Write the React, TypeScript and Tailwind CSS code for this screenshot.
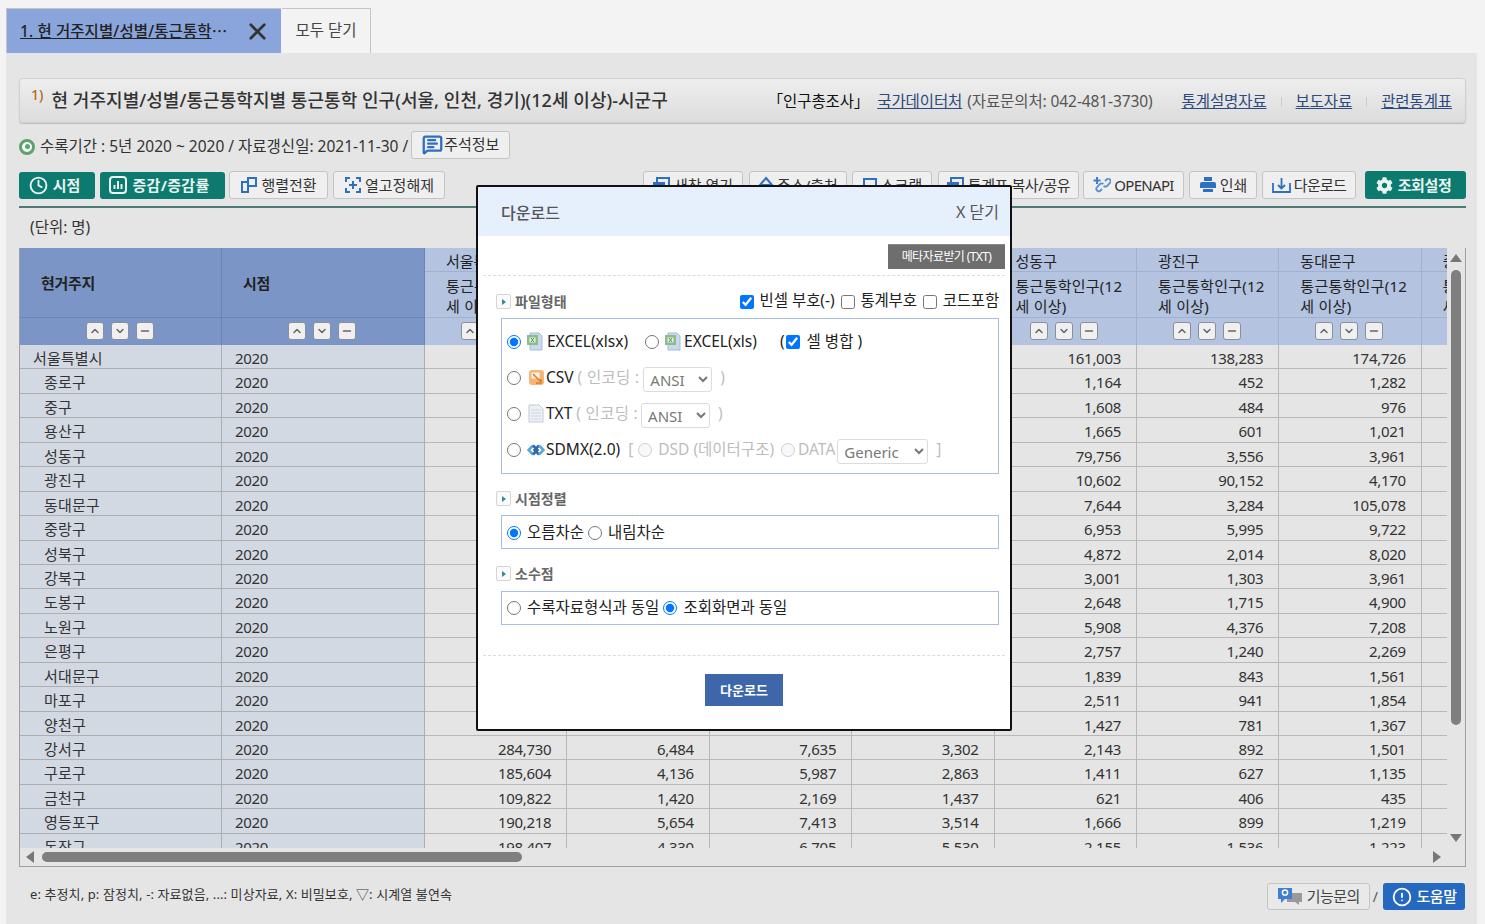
import { Clock, MessageSquareText, ChevronUp, ChevronDown, Minus, X, Info } from 'lucide-react';
import { FaCog } from 'react-icons/fa';

const font = { fontFamily: '"Noto Sans", "Noto Sans CJK KR", sans-serif' };

const names = ['서울특별시', '종로구', '중구', '용산구', '성동구', '광진구', '동대문구', '중랑구', '성북구', '강북구', '도봉구', '노원구', '은평구', '서대문구', '마포구', '양천구', '강서구', '구로구', '금천구', '영등포구', '동작구'];

// columns hidden behind the dialog are only filled in for the last rows
const blank = (tail: string[]) => [...Array(16).fill(''), ...tail];
const colA = blank(['284,730', '185,604', '109,822', '190,218', '198,407']);
const colB = blank(['6,484', '4,136', '1,420', '5,654', '4,330']);
const colC = blank(['7,635', '5,987', '2,169', '7,413', '6,705']);
const colD = blank(['3,302', '2,863', '1,437', '3,514', '5,530']);
const colE = ['161,003', '1,164', '1,608', '1,665', '79,756', '10,602', '7,644', '6,953', '4,872', '3,001', '2,648', '5,908', '2,757', '1,839', '2,511', '1,427', '2,143', '1,411', '621', '1,666', '2,155'];
const colF = ['138,283', '452', '484', '601', '3,556', '90,152', '3,284', '5,995', '2,014', '1,303', '1,715', '4,376', '1,240', '843', '941', '781', '892', '627', '406', '899', '1,536'];
const colG = ['174,726', '1,282', '976', '1,021', '3,961', '4,170', '105,078', '9,722', '8,020', '3,961', '4,900', '7,208', '2,269', '1,561', '1,854', '1,367', '1,501', '1,135', '435', '1,219', '1,223'];
const dataCols = [colA, colB, colC, colD, colE, colF, colG];

const heads = ['서울특별시', '종로구', '중구', '용산구', '성동구', '광진구', '동대문구', '중랑구'];

function SortButtons() {
  const cls = 'flex h-[18px] w-[18px] items-center justify-center rounded-[3px] border border-[#8a8f98] bg-[#f0f0f0] text-[#666]';
  return (
    <div className="mr-[2px] mb-[2px] flex gap-[7px]">
      <span className={cls}><ChevronUp size={12} strokeWidth={3} /></span>
      <span className={cls}><ChevronDown size={12} strokeWidth={3} /></span>
      <span className={cls}><Minus size={12} strokeWidth={3} /></span>
    </div>
  );
}

function TableHead() {
  return (
    <div className="grid h-[97px] w-[1545px] grid-cols-[202px_203px_repeat(8,142.4px)] grid-rows-[24px_45px_28px] text-[15px] text-[#222]">
      <div className="row-span-2 flex items-start border-r border-[#6a84b3] bg-[#7b96c6] pt-[24px] pl-[21px] font-bold tracking-[-0.3px]">현거주지</div>
      <div className="row-span-2 flex items-start border-r border-[#6a84b3] bg-[#7b96c6] pt-[24px] pl-[21px] font-bold tracking-[-0.3px]">시점</div>
      {heads.map((h) => (
        <div key={h} className="flex items-center border-r border-b border-[#9fb1d1] bg-[#b3c3e0] pt-[3px] pl-[21px]">{h}</div>
      ))}
      {heads.map((h) => (
        <div key={h} className="border-r border-[#9fb1d1] bg-[#b3c3e0] pt-[4px] pr-[8px] pl-[21px] leading-[20px] tracking-[0.25px]">통근통학인구(12세 이상)</div>
      ))}
      <div className="flex items-center justify-center border-t border-r border-[#6a84b3] bg-[#7b96c6]"><SortButtons /></div>
      <div className="flex items-center justify-center border-t border-r border-[#6a84b3] bg-[#7b96c6]"><SortButtons /></div>
      {heads.map((h) => (
        <div key={h} className="flex items-center justify-center border-t border-r border-[#9fb1d1] bg-[#b3c3e0]"><SortButtons /></div>
      ))}
    </div>
  );
}

function TableBody() {
  return (
    <div className="w-[1545px] text-[15px] text-[#333]">
      {names.map((name, i) => (
        <div key={name} className="grid grid-cols-[202px_203px_repeat(8,142.4px)] grid-rows-[24.45px] leading-[24px]">
          <div className={`border-r border-b border-[#aeaeae] bg-[#d3d9e2] pt-[1px] tracking-[0.15px] ${i === 0 ? 'pl-[13px]' : 'pl-[24px]'}`}>{name}</div>
          <div className="border-r border-b border-[#aeaeae] bg-[#d3d9e2] pt-[1px] pl-[13px] tracking-[-0.3px]">2020</div>
          {dataCols.map((col, c) => (
            <div key={c} className="border-r border-b border-[#b8b8b8] pt-[1px] pr-[15px] text-right tracking-[-0.3px]">{col[i]}</div>
          ))}
          <div className="border-b border-[#b8b8b8]" />
        </div>
      ))}
    </div>
  );
}

function ToolButton({ children, className = '' }: { children: React.ReactNode; className?: string }) {
  return (
    <span className={`flex h-[28px] items-center justify-center gap-[3px] rounded-[3px] border border-[#c4c4c4] bg-[#efefef] text-[15px] text-[#333] ${className}`}>
      {children}
    </span>
  );
}

function SectionTitle({ label }: { label: string }) {
  return (
    <div className="flex items-center gap-[4px] text-[14px] font-bold text-[#666]">
      <span className="flex h-[15px] w-[15px] items-center justify-center rounded-[2px] border border-[#d5d5d5] bg-[#fafafa]">
        <span className="h-0 w-0 border-y-[3px] border-l-[4px] border-y-transparent border-l-[#2f8f8f]" />
      </span>
      {label}
    </div>
  );
}

function ExcelIcon() {
  return (
    <svg width="17" height="19" viewBox="0 0 17 19">
      <path d="M4 1h9l3 3v14H4z" fill="#c9d9ee" stroke="#a5bcd8" />
      <rect x="1" y="3" width="11" height="10" fill="#8dbb8a" />
      <rect x="3.5" y="5.5" width="6" height="5" fill="#e7f2e4" />
      <path d="M5 6l3 4M8 6l-3 4" stroke="#4f8f4f" />
    </svg>
  );
}

function CsvIcon() {
  return (
    <svg width="17" height="17" viewBox="0 0 17 17">
      <rect x="1" y="1" width="15" height="15" rx="3" fill="#f6b677" />
      <rect x="3.5" y="3.5" width="8" height="6" fill="#fff3e2" />
      <path d="M5 5l7 7M13 10v4H8" stroke="#d97f2a" strokeWidth="1.6" fill="none" />
    </svg>
  );
}

function TxtIcon() {
  return (
    <svg width="16" height="19" viewBox="0 0 16 19">
      <path d="M1 1h10l4 4v13H1z" fill="#eef1f5" stroke="#c3c9d1" />
      <path d="M3 6h10M3 9h10M3 12h10M3 15h10" stroke="#cdd6e2" />
    </svg>
  );
}

function SdmxIcon() {
  return (
    <svg width="18" height="12" viewBox="0 0 18 12" fill="none" strokeWidth="2.6">
      <path d="M6 1.5L1.5 6 6 10.5" stroke="#5aa6dc" />
      <path d="M6 1.5L10.5 6 6 10.5" stroke="#2f6aa8" />
      <path d="M12 1.5L7.5 6 12 10.5" stroke="#2f6aa8" />
      <path d="M12 1.5L16.5 6 12 10.5" stroke="#5aa6dc" />
    </svg>
  );
}

function OpenApiIcon() {
  return (
    <svg width="18" height="18" viewBox="0 0 18 18" fill="none">
      <path d="M4 1v7M0.5 4.5h7" stroke="#3f7fd0" strokeWidth="2" />
      <path d="M12 5l1.5-1.5a2.4 2.4 0 0 1 3.4 3.4L14 10a2.4 2.4 0 0 1-3.4 0" stroke="#5d8ed0" strokeWidth="1.8" />
      <path d="M9 13l-1.5 1.5a2.4 2.4 0 0 1-3.4-3.4L7 8a2.4 2.4 0 0 1 3.4 0" stroke="#5d8ed0" strokeWidth="1.8" />
    </svg>
  );
}

function PrintIcon() {
  return (
    <svg width="18" height="18" viewBox="0 0 18 18">
      <rect x="5" y="1" width="8" height="4" fill="#2f6fc0" />
      <path d="M1 8a2 2 0 0 1 2-2h12a2 2 0 0 1 2 2v4H1z" fill="#2f6fc0" />
      <rect x="4" y="13" width="10" height="3" fill="#2f6fc0" />
    </svg>
  );
}

function TrayIcon() {
  return (
    <svg width="19" height="18" viewBox="0 0 19 18" fill="none" stroke="#2f6fc0" strokeWidth="1.8">
      <path d="M1 7v9h17V7" />
      <path d="M9.5 2v10M6 9l3.5 3.5L13 9" />
    </svg>
  );
}

function SwapIcon() {
  return (
    <svg width="18" height="18" viewBox="0 0 18 18" fill="none" stroke="#2f6fc0" strokeWidth="2">
      <rect x="8" y="2" width="8" height="8" />
      <path d="M8 6H2v10h6v-5" />
    </svg>
  );
}

function UnfreezeIcon() {
  return (
    <svg width="18" height="18" viewBox="0 0 18 18" fill="none" stroke="#2f6fc0" strokeWidth="2">
      <path d="M6 2H2v4M12 2h4v4M6 16H2v-4M12 16h4v-4M9 5v8M5 9h8" />
    </svg>
  );
}

function WindowIcon() {
  return (
    <svg width="18" height="18" viewBox="0 0 18 18" fill="none" stroke="#2f6fc0" strokeWidth="2">
      <rect x="4" y="2" width="12" height="10" />
      <rect x="1" y="7" width="10" height="9" fill="#2f6fc0" />
    </svg>
  );
}

function UpIcon() {
  return (
    <svg width="16" height="18" viewBox="0 0 16 18" fill="none" stroke="#2f6fc0" strokeWidth="2">
      <path d="M8 2l6 7H2z" />
      <rect x="4" y="9" width="8" height="7" />
    </svg>
  );
}

function ScrapIcon() {
  return (
    <svg width="16" height="18" viewBox="0 0 16 18" fill="none" stroke="#2f6fc0" strokeWidth="2">
      <rect x="2" y="3" width="12" height="13" />
    </svg>
  );
}

function ChangeIcon() {
  return (
    <svg width="18" height="18" viewBox="0 0 18 18">
      <rect x="1" y="1" width="16" height="16" rx="3" fill="none" stroke="#eaf4f2" strokeWidth="2" />
      <path d="M5.5 13V9M9 13V5M12.5 13V8" stroke="#eaf4f2" strokeWidth="2" />
    </svg>
  );
}

function ChatIcon() {
  return (
    <svg width="26" height="19" viewBox="0 0 26 19">
      <path d="M10 6h15v9h-3v3l-4-3h-8z" fill="#9a9a9a" />
      <path d="M1 1h14v11H8l-4 4v-4H1z" fill="#3f7fd0" />
      <circle cx="8" cy="5.5" r="2.6" fill="none" stroke="#fff" strokeWidth="1.5" />
    </svg>
  );
}

function DownloadDialog() {
  const disabled = 'text-[#bdbdbd] text-[15.5px]';
  const selectCls = 'mt-[4px] h-[25px] rounded-[3px] border border-[#dcdcdc] bg-white pl-[2px] text-[15px] text-[#777]';
  const fileName = 'text-[15.5px]';
  return (
    <div className="absolute top-[185px] left-[476px] z-10 h-[546px] w-[536px] rounded-[2px] border-2 border-[#111] bg-white text-[15.5px] text-[#222]" style={font}>
      <div className="flex h-[49px] items-center justify-between bg-[#e6effc] pr-[11px] pl-[23px] text-[#555]">
        <span className="pt-[2px] text-[16px] font-medium">다운로드</span>
        <span className="text-[16px]">X 닫기</span>
      </div>
      <div className="flex justify-end pt-[8px] pr-[5px]">
        <span className="flex h-[25px] w-[117px] items-center justify-center border-t border-[#888] bg-[#6e6e6e] text-[12px] tracking-[-0.6px] text-white">메타자료받기 (TXT)</span>
      </div>
      <div className="mx-[5px] mt-[6px] border-t border-dashed border-[#dcdcdc]" />

      <div className="mt-[15px] flex h-[21px] items-center justify-between pr-[11px] pl-[18px]">
        <SectionTitle label="파일형태" />
        <div className="flex items-center gap-[6px] leading-[20px]">
          <input type="checkbox" defaultChecked className="m-0 h-[14px] w-[14px]" />
          <span className="mb-[4px] tracking-[-0.05px]">빈셀 부호(-)</span>
          <input type="checkbox" className="m-0 h-[14px] w-[14px]" />
          <span className="mb-[4px] tracking-[-0.2px]">통계부호</span>
          <input type="checkbox" className="m-0 h-[14px] w-[14px]" />
          <span className="mb-[4px] tracking-[-0.2px]">코드포함</span>
        </div>
      </div>
      <div className="mt-[6px] mr-[11px] ml-[23px] flex h-[156px] flex-col gap-[11px] border border-[#a9bfe0] px-[5px] pt-[10px]">
        <div className="flex h-[25px] items-center">
          <input type="radio" name="kind" defaultChecked className="m-0 h-[14px] w-[14px]" />
          <span className="ml-[5px]"><ExcelIcon /></span>
          <span className={`ml-[4px] ${fileName}`}>EXCEL(xlsx)</span>
          <input type="radio" name="kind" className="m-0 ml-[17px] h-[14px] w-[14px]" />
          <span className="ml-[5px]"><ExcelIcon /></span>
          <span className={`ml-[3px] ${fileName}`}>EXCEL(xls)</span>
          <span className="ml-[23px]">(</span>
          <input type="checkbox" defaultChecked className="m-0 ml-[1px] h-[14px] w-[14px]" />
          <span className="ml-[7px]">셀 병합 )</span>
        </div>
        <div className="flex h-[25px] items-center">
          <input type="radio" name="kind" className="m-0 h-[14px] w-[14px]" />
          <span className="ml-[7px]"><CsvIcon /></span>
          <span className={`ml-[1px] ${fileName}`}>CSV</span>
          <span className={`ml-[4px] tracking-[0.3px] ${disabled}`}>( 인코딩 :</span>
          <select disabled className={`ml-[4px] w-[69px] ${selectCls}`}><option>ANSI</option></select>
          <span className={`ml-[8px] ${disabled}`}>)</span>
        </div>
        <div className="flex h-[25px] items-center">
          <input type="radio" name="kind" className="m-0 h-[14px] w-[14px]" />
          <span className="ml-[7px]"><TxtIcon /></span>
          <span className={`ml-[2px] ${fileName}`}>TXT</span>
          <span className={`ml-[4px] tracking-[0.3px] ${disabled}`}>( 인코딩 :</span>
          <select disabled className={`ml-[3px] w-[69px] ${selectCls}`}><option>ANSI</option></select>
          <span className={`ml-[8px] ${disabled}`}>)</span>
        </div>
        <div className="flex h-[25px] items-center">
          <input type="radio" name="kind" className="m-0 h-[14px] w-[14px]" />
          <span className="ml-[6px]"><SdmxIcon /></span>
          <span className={`ml-[1px] ${fileName}`}>SDMX(2.0)</span>
          <span className={`ml-[8px] ${disabled}`}>[</span>
          <input type="radio" disabled className="m-0 ml-[5px] h-[14px] w-[14px]" />
          <span className={`ml-[6px] ${disabled}`}>DSD (데이터구조)</span>
          <input type="radio" disabled className="m-0 ml-[7px] h-[14px] w-[14px]" />
          <span className={`ml-[3px] ${disabled}`}>DATA</span>
          <select disabled className={`ml-[2px] w-[91px] ${selectCls}`}><option>Generic</option></select>
          <span className={`ml-[8px] ${disabled}`}>]</span>
        </div>
      </div>

      <div className="mt-[14px] pl-[18px]"><SectionTitle label="시점정렬" /></div>
      <div className="mt-[6px] mr-[11px] ml-[23px] flex h-[34px] items-center border border-[#a9bfe0] px-[5px]">
        <input type="radio" name="order" defaultChecked className="m-0 mt-[1px] h-[14px] w-[14px]" />
        <span className="mt-[2px] ml-[6px]">오름차순</span>
        <input type="radio" name="order" className="m-0 mt-[1px] ml-[4px] h-[14px] w-[14px]" />
        <span className="mt-[2px] ml-[6px]">내림차순</span>
      </div>

      <div className="mt-[14px] pl-[18px]"><SectionTitle label="소수점" /></div>
      <div className="mt-[7px] mr-[11px] ml-[23px] flex h-[34px] items-center border border-[#a9bfe0] px-[5px]">
        <input type="radio" name="dec" className="m-0 h-[14px] w-[14px]" />
        <span className="ml-[6px]">수록자료형식과 동일</span>
        <input type="radio" name="dec" defaultChecked className="m-0 ml-[4px] h-[14px] w-[14px]" />
        <span className="ml-[6px]">조회화면과 동일</span>
      </div>

      <div className="mx-[5px] mt-[30px] border-t border-dashed border-[#dcdcdc]" />
      <div className="mt-[18px] flex justify-center">
        <span className="flex h-[32px] w-[78px] items-center justify-center bg-[#3e66ab] pt-[1px] text-[13px] font-bold text-white">다운로드</span>
      </div>
    </div>
  );
}

export default function App() {
  return (
    <div className="relative flex h-[924px] w-[1485px] flex-col overflow-hidden bg-[#f3f3f3] pr-[8px] pl-[6px]" style={font}>
      {/* tab strip */}
      <div className="flex h-[53px] items-end">
        <div className="flex h-[45px] w-[275px] items-center justify-between border-t border-l border-[#c5c5c5] bg-[#8aa5db] pr-[10px] pl-[13px] text-[15.5px] font-medium tracking-[0.1px] text-[#222]">
          <span className="flex items-baseline whitespace-nowrap"><span className="underline">1. 현 거주지별/성별/통근통학</span><span style={{ fontFamily: '"Noto Sans CJK KR", sans-serif' }}>…</span></span>
          <X size={27} strokeWidth={2.4} className="shrink-0 text-[#333]" />
        </div>
        <div className="ml-px flex h-[45px] w-[89px] items-center justify-center border-t border-r border-[#c5c5c5] bg-[#f3f3f3] text-[15.5px] text-[#444]">모두 닫기</div>
      </div>

      <div className="flex flex-1 flex-col bg-[#e5e5e5] pt-[25px] pr-[11px] pl-[13px]">
        {/* title bar */}
        <div className="flex h-[45px] items-center justify-between rounded-[4px] border border-[#d0d0d0] bg-gradient-to-b from-[#eeeeee] to-[#dcdcdc] pr-[13px] pl-[11px] shadow-[0_1px_1px_#bbb]">
          <div className="flex items-center pb-[1px] text-[18px] font-medium tracking-[0.05px] whitespace-nowrap text-[#333]">
            <span className="mr-[8px] -translate-y-[6px] text-[14px] text-[#b06a28]">1)</span>
            현 거주지별/성별/통근통학지별 통근통학 인구(서울, 인천, 경기)(12세 이상)-시군구
          </div>
          <div className="flex items-center pt-[3px] text-[15.5px] tracking-[-0.1px] whitespace-nowrap text-[#333]">
            <span className="text-[#111]">「인구총조사」</span>
            <span className="ml-[8px] text-[#2c4a7c] underline">국가데이터처</span>
            <span className="ml-[5px] text-[#555]">(자료문의처: 042-481-3730)</span>
            <span className="ml-[29px] text-[#2c4a7c] underline">통계설명자료</span>
            <span className="mx-[14px] h-[10px] border-l border-[#ccc]" />
            <span className="text-[#2c4a7c] underline">보도자료</span>
            <span className="mx-[14px] h-[10px] border-l border-[#ccc]" />
            <span className="text-[#2c4a7c] underline">관련통계표</span>
          </div>
        </div>

        {/* collection period */}
        <div className="mt-[7px] flex h-[29px] items-center text-[15.5px] text-[#333]">
          <span className="mt-[4px] mr-[5px] flex h-[16px] w-[16px] items-center justify-center rounded-full border-[3px] border-[#5aa469] bg-white">
            <span className="h-[5px] w-[5px] rounded-full bg-[#5aa469]" />
          </span>
          <span className="mt-[5px]">수록기간 : 5년 2020 ~ 2020 / 자료갱신일: 2021-11-30 /</span>
          <span className="ml-[3px] flex h-[28px] w-[99px] items-center justify-center gap-[1px] rounded-[3px] border border-[#c4c4c4] bg-[#efefef] text-[15px]">
            <MessageSquareText size={21} strokeWidth={2.6} className="text-[#2f6fc0]" />주석정보
          </span>
        </div>

        {/* toolbar */}
        <div className="mt-[12px] flex h-[28px] items-center">
          <span className="flex h-[27px] w-[76px] items-center justify-center gap-[5px] rounded-[3px] bg-[#0d7a70] pr-[5px] text-[15px] font-bold text-[#e8f5f2]">
            <Clock size={19} strokeWidth={2.4} />시점
          </span>
          <span className="ml-[5px] flex h-[27px] w-[125px] items-center justify-center gap-[5px] rounded-[3px] bg-[#0d7a70] pr-[6px] text-[15px] font-bold tracking-[0.3px] text-[#e8f5f2]">
            <ChangeIcon />증감/증감률
          </span>
          <ToolButton className="ml-[4px] w-[99px]"><SwapIcon />행렬전환</ToolButton>
          <ToolButton className="ml-[5px] w-[112px]"><UnfreezeIcon />열고정해제</ToolButton>
          <div className="flex-1" />
          <ToolButton className="w-[100px]"><WindowIcon />새창 열기</ToolButton>
          <ToolButton className="ml-[6px] w-[98px]"><UpIcon />주소/출처</ToolButton>
          <ToolButton className="ml-[5px] w-[80px]"><ScrapIcon />스크랩</ToolButton>
          <ToolButton className="ml-[6px] w-[141px] tracking-[-0.4px]"><WindowIcon />통계표 복사/공유</ToolButton>
          <ToolButton className="ml-[4px] w-[101px] tracking-[-0.7px]"><OpenApiIcon />OPENAPI</ToolButton>
          <ToolButton className="ml-[5px] w-[68px]"><PrintIcon />인쇄</ToolButton>
          <ToolButton className="ml-[5px] w-[94px] tracking-[-0.7px]"><TrayIcon />다운로드</ToolButton>
          <span className="ml-[9px] flex h-[28px] w-[101px] items-center justify-center gap-[5px] rounded-[3px] bg-[#0d7a70] pr-[4px] text-[15px] font-bold tracking-[-0.4px] text-[#e8f5f2]">
            <FaCog size={17} />조회설정
          </span>
        </div>
        <div className="mt-[7px] h-[2px] bg-[#4d7a74]" />

        <div className="mt-[9px] h-[31px] pl-[11px] text-[15.5px] leading-[20px] text-[#333]">(단위: 명)</div>

        {/* table + scrollbars */}
        <div className="border-r border-b border-l border-[#9f9f9f]">
          <div className="flex">
            <div className="h-[600px] w-[1427px] overflow-hidden">
              <TableHead />
              <TableBody />
            </div>
            <div className="flex h-[600px] w-[18px] flex-col items-center bg-[#e5e5e5] pt-[6px] pb-[6px]">
              <span className="h-0 w-0 border-x-[6px] border-b-[8px] border-x-transparent border-b-[#777]" />
              <span className="mt-[8px] h-[455px] w-[10px] rounded-full bg-[#7f7f7f]" />
              <div className="flex-1" />
              <span className="h-0 w-0 border-x-[6px] border-t-[8px] border-x-transparent border-t-[#777]" />
            </div>
          </div>
          <div className="flex h-[18px] items-center px-[6px]">
            <span className="h-0 w-0 border-y-[6px] border-r-[8px] border-y-transparent border-r-[#777]" />
            <span className="ml-[8px] h-[10px] w-[480px] rounded-full bg-[#7f7f7f]" />
            <div className="flex-1" />
            <span className="mr-[18px] h-0 w-0 border-y-[6px] border-l-[8px] border-y-transparent border-l-[#777]" />
          </div>
        </div>

        {/* legend and help */}
        <div className="mt-[16px] flex items-center justify-between pr-[1px]">
          <span className="mb-[4px] pl-[11px] text-[13px] tracking-[0.1px] text-[#333]">e: 추정치, p: 잠정치, -: 자료없음, ...: 미상자료, X: 비밀보호, ▽: 시계열 불연속</span>
          <div className="flex items-center gap-[3px]">
            <span className="flex h-[27px] w-[103px] items-center justify-center gap-[4px] rounded-[3px] border border-[#c4c4c4] bg-[#e9e9e9] text-[15px] tracking-[-0.5px] text-[#444]">
              <ChatIcon />기능문의
            </span>
            <span className="text-[14px] text-[#555]">/</span>
            <span className="ml-[2px] flex h-[27px] w-[82px] items-center justify-center gap-[5px] rounded-[3px] bg-[#2568c0] text-[15px] font-medium tracking-[-0.5px] text-white">
              <Info size={20} strokeWidth={2.2} className="rotate-180" />도움말
            </span>
          </div>
        </div>
      </div>

      <DownloadDialog />
    </div>
  );
}
